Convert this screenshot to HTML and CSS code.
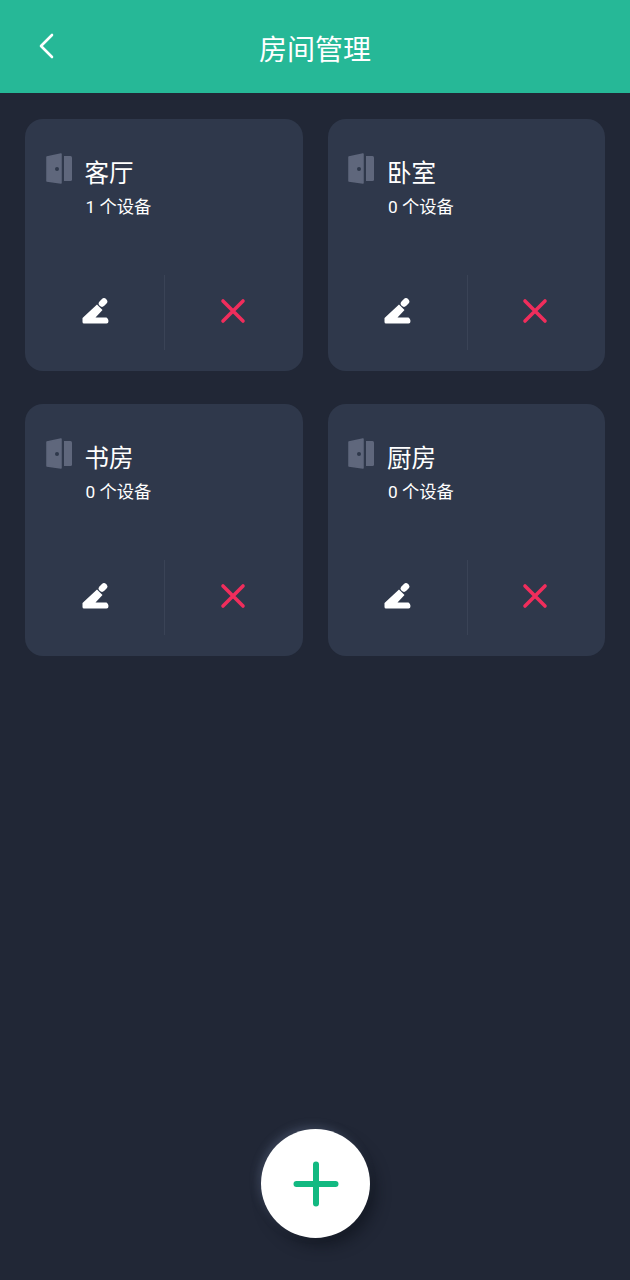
FILE: index.html
```html
<!DOCTYPE html>
<html lang="zh-CN">
<head>
    <meta charset="UTF-8">
    <title>房间管理</title>
    <link rel="stylesheet" href="styles.css">
</head>
<body>
<div class="page">
    <header class="header">
        <svg class="back" width="16" height="26" viewBox="0 0 16 26">
            <path d="M14 2 L3 13 L14 24" fill="none" stroke="#fff" stroke-width="2.6" stroke-linecap="round" stroke-linejoin="round"/>
        </svg>
        <h1 class="title">房间管理</h1>
    </header>

    <div class="rooms">
        <div class="card">
            <div class="info">
                <svg class="door" width="26" height="32" viewBox="0 0 26 32">
                    <path d="M1 4 L15 1 V30 L1 28 Z" fill="#5f677c" stroke="#5f677c" stroke-width="1.5" stroke-linejoin="round"/>
                    <path d="M18 3 H24.5 Q26 3 26 4.5 V26.5 Q26 28 24.5 28 H18 Z" fill="#5f677c"/>
                    <circle cx="11" cy="16" r="2" fill="#2f384b"/>
                </svg>
                <div class="text">
                    <div class="name">客厅</div>
                    <div class="count">1 个设备</div>
                </div>
            </div>
            <div class="actions">
                <div class="action action-edit">
                    <svg width="28" height="28" viewBox="0 0 28 28">
                        <path d="M1.5 21 L16 7.5 L21.5 13 L14.5 20.5 H25.5 Q27.5 21.5 27.5 24 Q27.5 26.5 25.5 26.5 H3 Q1.5 26.5 1.5 25 Z" fill="#fff"/>
                        <path d="M21 6.5 L23 4.5" stroke="#fff" stroke-width="6.5" stroke-linecap="round"/>
                    </svg>
                </div>
                <div class="action action-delete">
                    <svg width="26" height="26" viewBox="0 0 26 26">
                        <path d="M3 3 L23 23 M23 3 L3 23" stroke="#f02d5c" stroke-width="3.6" stroke-linecap="round"/>
                    </svg>
                </div>
            </div>
        </div>

        <div class="card">
            <div class="info">
                <svg class="door" width="26" height="32" viewBox="0 0 26 32">
                    <path d="M1 4 L15 1 V30 L1 28 Z" fill="#5f677c" stroke="#5f677c" stroke-width="1.5" stroke-linejoin="round"/>
                    <path d="M18 3 H24.5 Q26 3 26 4.5 V26.5 Q26 28 24.5 28 H18 Z" fill="#5f677c"/>
                    <circle cx="11" cy="16" r="2" fill="#2f384b"/>
                </svg>
                <div class="text">
                    <div class="name">卧室</div>
                    <div class="count">0 个设备</div>
                </div>
            </div>
            <div class="actions">
                <div class="action action-edit">
                    <svg width="28" height="28" viewBox="0 0 28 28">
                        <path d="M1.5 21 L16 7.5 L21.5 13 L14.5 20.5 H25.5 Q27.5 21.5 27.5 24 Q27.5 26.5 25.5 26.5 H3 Q1.5 26.5 1.5 25 Z" fill="#fff"/>
                        <path d="M21 6.5 L23 4.5" stroke="#fff" stroke-width="6.5" stroke-linecap="round"/>
                    </svg>
                </div>
                <div class="action action-delete">
                    <svg width="26" height="26" viewBox="0 0 26 26">
                        <path d="M3 3 L23 23 M23 3 L3 23" stroke="#f02d5c" stroke-width="3.6" stroke-linecap="round"/>
                    </svg>
                </div>
            </div>
        </div>

        <div class="card">
            <div class="info">
                <svg class="door" width="26" height="32" viewBox="0 0 26 32">
                    <path d="M1 4 L15 1 V30 L1 28 Z" fill="#5f677c" stroke="#5f677c" stroke-width="1.5" stroke-linejoin="round"/>
                    <path d="M18 3 H24.5 Q26 3 26 4.5 V26.5 Q26 28 24.5 28 H18 Z" fill="#5f677c"/>
                    <circle cx="11" cy="16" r="2" fill="#2f384b"/>
                </svg>
                <div class="text">
                    <div class="name">书房</div>
                    <div class="count">0 个设备</div>
                </div>
            </div>
            <div class="actions">
                <div class="action action-edit">
                    <svg width="28" height="28" viewBox="0 0 28 28">
                        <path d="M1.5 21 L16 7.5 L21.5 13 L14.5 20.5 H25.5 Q27.5 21.5 27.5 24 Q27.5 26.5 25.5 26.5 H3 Q1.5 26.5 1.5 25 Z" fill="#fff"/>
                        <path d="M21 6.5 L23 4.5" stroke="#fff" stroke-width="6.5" stroke-linecap="round"/>
                    </svg>
                </div>
                <div class="action action-delete">
                    <svg width="26" height="26" viewBox="0 0 26 26">
                        <path d="M3 3 L23 23 M23 3 L3 23" stroke="#f02d5c" stroke-width="3.6" stroke-linecap="round"/>
                    </svg>
                </div>
            </div>
        </div>

        <div class="card">
            <div class="info">
                <svg class="door" width="26" height="32" viewBox="0 0 26 32">
                    <path d="M1 4 L15 1 V30 L1 28 Z" fill="#5f677c" stroke="#5f677c" stroke-width="1.5" stroke-linejoin="round"/>
                    <path d="M18 3 H24.5 Q26 3 26 4.5 V26.5 Q26 28 24.5 28 H18 Z" fill="#5f677c"/>
                    <circle cx="11" cy="16" r="2" fill="#2f384b"/>
                </svg>
                <div class="text">
                    <div class="name">厨房</div>
                    <div class="count">0 个设备</div>
                </div>
            </div>
            <div class="actions">
                <div class="action action-edit">
                    <svg width="28" height="28" viewBox="0 0 28 28">
                        <path d="M1.5 21 L16 7.5 L21.5 13 L14.5 20.5 H25.5 Q27.5 21.5 27.5 24 Q27.5 26.5 25.5 26.5 H3 Q1.5 26.5 1.5 25 Z" fill="#fff"/>
                        <path d="M21 6.5 L23 4.5" stroke="#fff" stroke-width="6.5" stroke-linecap="round"/>
                    </svg>
                </div>
                <div class="action action-delete">
                    <svg width="26" height="26" viewBox="0 0 26 26">
                        <path d="M3 3 L23 23 M23 3 L3 23" stroke="#f02d5c" stroke-width="3.6" stroke-linecap="round"/>
                    </svg>
                </div>
            </div>
        </div>
    </div>

    <div class="add">
        <svg width="46" height="46" viewBox="0 0 46 46">
            <path d="M23 3.5 V42.5 M3.5 23 H42.5" stroke="#12b981" stroke-width="6" stroke-linecap="round"/>
        </svg>
    </div>
</div>
</body>
</html>
```

FILE: styles.css
```css
html, body {
    margin: 0;
    padding: 0;
}

body {
    background-color: #212736;
    font-family: "Roboto", "Noto Sans CJK SC", sans-serif;
    color: #fff;
}

.page {
    height: 1280px;
    display: flex;
    flex-direction: column;
    overflow: hidden;
}

.header {
    height: 93px;
    flex: none;
    background-color: #26b897;
    position: relative;
    display: flex;
    align-items: center;
    justify-content: center;
}

.back {
    position: absolute;
    left: 38px;
    top: 33px;
}

.title {
    margin: 0;
    padding-top: 8px;
    font-size: 28px;
    font-weight: 400;
    line-height: 40px;
}

.rooms {
    display: grid;
    grid-template-columns: 278px 277.5px;
    grid-auto-rows: 252px;
    gap: 33px 24.5px;
    padding: 25.5px 25px 0 25px;
}

.card {
    background-color: #2f384b;
    border-radius: 18px;
    display: flex;
    flex-direction: column;
    justify-content: space-between;
}

.info {
    display: flex;
    padding: 34px 0 0 20.5px;
    gap: 13px;
}

.door {
    flex: none;
}

.text {
    padding-top: 4px;
}

.name {
    font-size: 24.5px;
    line-height: 34px;
}

.count {
    font-size: 17.3px;
    line-height: 20px;
    margin-top: 6px;
    padding-left: 1px;
}

.actions {
    display: flex;
    height: 75px;
    margin-bottom: 21px;
}

.action {
    box-sizing: border-box;
    display: flex;
    align-items: center;
    justify-content: center;
    padding-bottom: 3px;
}

.action-edit {
    flex: 0 0 140px;
    border-right: 1px solid #3a4356;
}

.action-delete {
    flex: 1;
    padding-right: 2px;
}

.add {
    position: absolute;
    left: 261px;
    top: 1129px;
    width: 109px;
    height: 109px;
    border-radius: 50%;
    background-color: #fff;
    display: flex;
    align-items: center;
    justify-content: center;
    box-shadow: 6px 8px 14px rgba(10, 13, 22, 0.5), -3px -3px 8px rgba(120, 135, 170, 0.3);
}
```
